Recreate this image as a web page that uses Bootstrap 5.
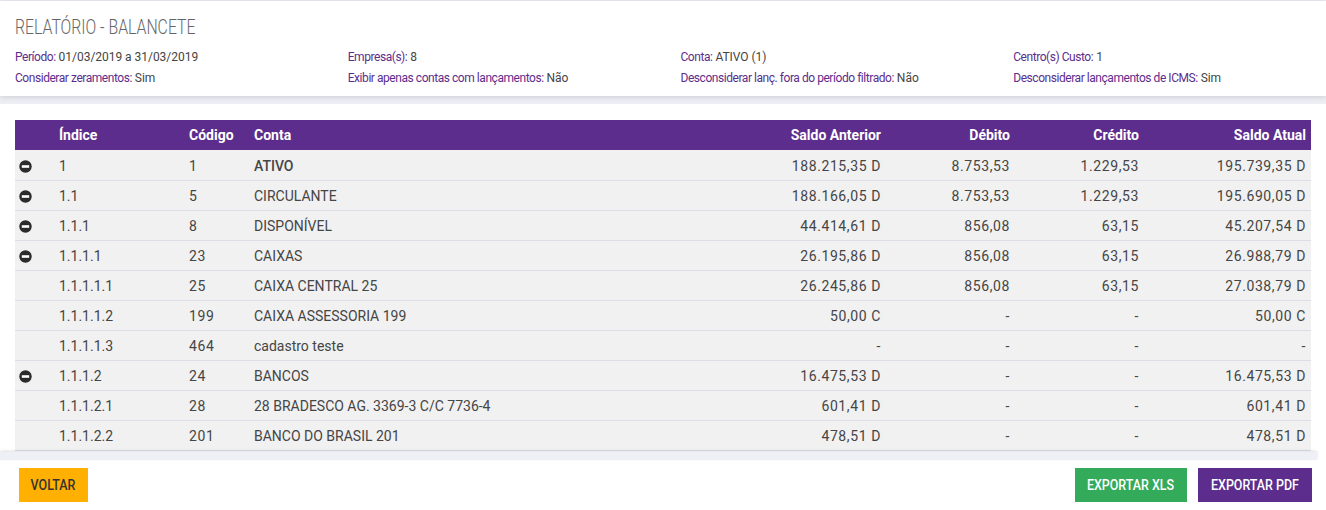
<!DOCTYPE html>
<html lang="pt-BR">
<head>
  <meta charset="UTF-8">
  <meta name="viewport" content="width=device-width, initial-scale=1.0">
  <title>Relatório - Balancete</title>
  <link href="https://cdn.jsdelivr.net/npm/bootstrap@5.3.0/dist/css/bootstrap.min.css" rel="stylesheet">
  <style>
    html, body { height: 100%; }
    body {
      font-family: "Roboto", "Liberation Sans", sans-serif;
      color: #3b3b3b;
      background: #fff;
      overflow: hidden;
    }
    .top-line { height: 1px; background: #eceef3; }
    .report-head {
      height: 95px;
      padding: 14px 15px 0;
      box-shadow: 0 1px 6px rgba(90, 90, 120, .25);
      position: relative;
    }
    .head-title {
      font-size: 20px;
      line-height: 24px;
      color: #666;
      margin: 0 0 10px;
      font-weight: 300;
      transform: scaleX(.79);
      transform-origin: left center;
    }
    .meta-grid { display: grid; grid-template-columns: repeat(4, 332.75px); row-gap: 5px; }
    .meta-item { font-size: 12px; line-height: 16px; color: #444; letter-spacing: -.03px; }
    .meta-item b { font-weight: 400; color: #5c2d8c; letter-spacing: -.45px; }
    .band { height: 8px; background: #eef0f5; }
    .report-body { height: 348px; overflow: hidden; padding: 16px 15px 0; width: 1326px; }
    .bal-table { table-layout: fixed; width: 1296px; margin: 0; font-size: 14px; }
    .bal-table th {
      background: #5c2d8c;
      color: #fff;
      height: 30px;
      padding: 0 5px;
      font-weight: 700;
      border: 0;
      vertical-align: middle;
    }
    .bal-table td {
      background: #f1f1f1;
      color: #454545;
      height: 30px;
      padding: 2px 5px 0;
      border-bottom: 1px solid #dcdde6;
      vertical-align: middle;
    }
    .bal-table tbody tr:first-child td { padding-top: 4px; }
    .bal-table td.num-cell { letter-spacing: .6px; }
    .bal-table strong { font-weight: 500; }
    .c-toggle { width: 39px; }
    .c-idx { width: 130px; }
    .c-cod { width: 65px; }
    .c-val { width: 129px; }
    .c-ant { width: 137px; }
    .c-atual { width: 167px; }
    .toggle-ico { display: block; width: 13px; height: 13px; margin-left: -1px; }
    .report-foot { height: 50px; }
    .foot-band { height: 8px; width: 1317px; background: #eef0f5; box-shadow: 0 -1px 3px rgba(90,90,120,.2); position: relative; }
    .foot-btns { padding: 8px 14px 0 19px; }
    .act-btn {
      font-size: 15px;
      font-weight: 500;
      line-height: 20px;
      height: 34px;
      padding: 7px 0;
      border: 0;
      border-radius: 0;
    }
    .act-btn span { display: inline-block; transform: scaleX(.83); }
    .act-back { width: 69px; background: #ffb000; color: #333; }
    .act-xls { width: 112px; background: #33ab5a; color: #fff; }
    .act-pdf { width: 114px; background: #5c2d8c; color: #fff; }
    .foot-gap { gap: 11px; }
  </style>
</head>
<body>
  <div class="top-line"></div>
  <div class="report-head bg-white">
    <h1 class="head-title">RELATÓRIO - BALANCETE</h1>
    <div class="meta-grid">
      <div class="meta-item"><b>Período:</b> 01/03/2019 a 31/03/2019</div>
      <div class="meta-item"><b>Empresa(s):</b> 8</div>
      <div class="meta-item"><b>Conta:</b> ATIVO (1)</div>
      <div class="meta-item"><b>Centro(s) Custo:</b> 1</div>
      <div class="meta-item"><b>Considerar zeramentos:</b> Sim</div>
      <div class="meta-item"><b>Exibir apenas contas com lançamentos:</b> Não</div>
      <div class="meta-item"><b>Desconsiderar lanç. fora do período filtrado:</b> Não</div>
      <div class="meta-item"><b>Desconsiderar lançamentos de ICMS:</b> Sim</div>
    </div>
  </div>
  <div class="band"></div>

  <div class="report-body">
    <table class="table bal-table">
      <colgroup>
        <col class="c-toggle"><col class="c-idx"><col class="c-cod"><col>
        <col class="c-ant"><col class="c-val"><col class="c-val"><col class="c-atual">
      </colgroup>
      <thead>
        <tr>
          <th></th><th>Índice</th><th>Código</th><th>Conta</th>
          <th class="text-end">Saldo Anterior</th><th class="text-end">Débito</th>
          <th class="text-end">Crédito</th><th class="text-end">Saldo Atual</th>
        </tr>
      </thead>
      <tbody id="rows"></tbody>
    </table>
  </div>

  <div class="report-foot">
    <div class="foot-band"></div>
    <div class="foot-btns d-flex justify-content-between">
      <button type="button" class="btn act-btn act-back"><span>VOLTAR</span></button>
      <div class="d-flex foot-gap">
        <button type="button" class="btn act-btn act-xls"><span>EXPORTAR XLS</span></button>
        <button type="button" class="btn act-btn act-pdf"><span>EXPORTAR PDF</span></button>
      </div>
    </div>
  </div>

  <script src="https://cdn.jsdelivr.net/npm/bootstrap@5.3.0/dist/js/bootstrap.bundle.min.js"></script>
  <script>
    const minusIcon = '<svg class="toggle-ico" viewBox="0 0 13 13"><circle cx="6.5" cy="6.5" r="6.2" fill="#2b2b2b"/><rect x="2.8" y="5.2" width="7.4" height="2.6" fill="#fff"/></svg>';
    const rows = [
      [1, '1', '1', 'ATIVO', '188.215,35 D', '8.753,53', '1.229,53', '195.739,35 D'],
      [1, '1.1', '5', 'CIRCULANTE', '188.166,05 D', '8.753,53', '1.229,53', '195.690,05 D'],
      [1, '1.1.1', '8', 'DISPONÍVEL', '44.414,61 D', '856,08', '63,15', '45.207,54 D'],
      [1, '1.1.1.1', '23', 'CAIXAS', '26.195,86 D', '856,08', '63,15', '26.988,79 D'],
      [0, '1.1.1.1.1', '25', 'CAIXA CENTRAL 25', '26.245,86 D', '856,08', '63,15', '27.038,79 D'],
      [0, '1.1.1.1.2', '199', 'CAIXA ASSESSORIA 199', '50,00 C', '-', '-', '50,00 C'],
      [0, '1.1.1.1.3', '464', 'cadastro teste', '-', '-', '-', '-'],
      [1, '1.1.1.2', '24', 'BANCOS', '16.475,53 D', '-', '-', '16.475,53 D'],
      [0, '1.1.1.2.1', '28', '28 BRADESCO AG. 3369-3 C/C 7736-4', '601,41 D', '-', '-', '601,41 D'],
      [0, '1.1.1.2.2', '201', 'BANCO DO BRASIL 201', '478,51 D', '-', '-', '478,51 D']
    ];
    document.getElementById('rows').innerHTML = rows.map((r, i) => `
      <tr>
        <td>${r[0] ? minusIcon : ''}</td><td>${r[1]}</td><td class="num-cell">${r[2]}</td>
        <td>${i === 0 ? '<strong>' + r[3] + '</strong>' : r[3]}</td>
        <td class="text-end num-cell">${r[4]}</td><td class="text-end num-cell">${r[5]}</td>
        <td class="text-end num-cell">${r[6]}</td><td class="text-end num-cell">${r[7]}</td>
      </tr>`).join('');
  </script>
</body>
</html>
